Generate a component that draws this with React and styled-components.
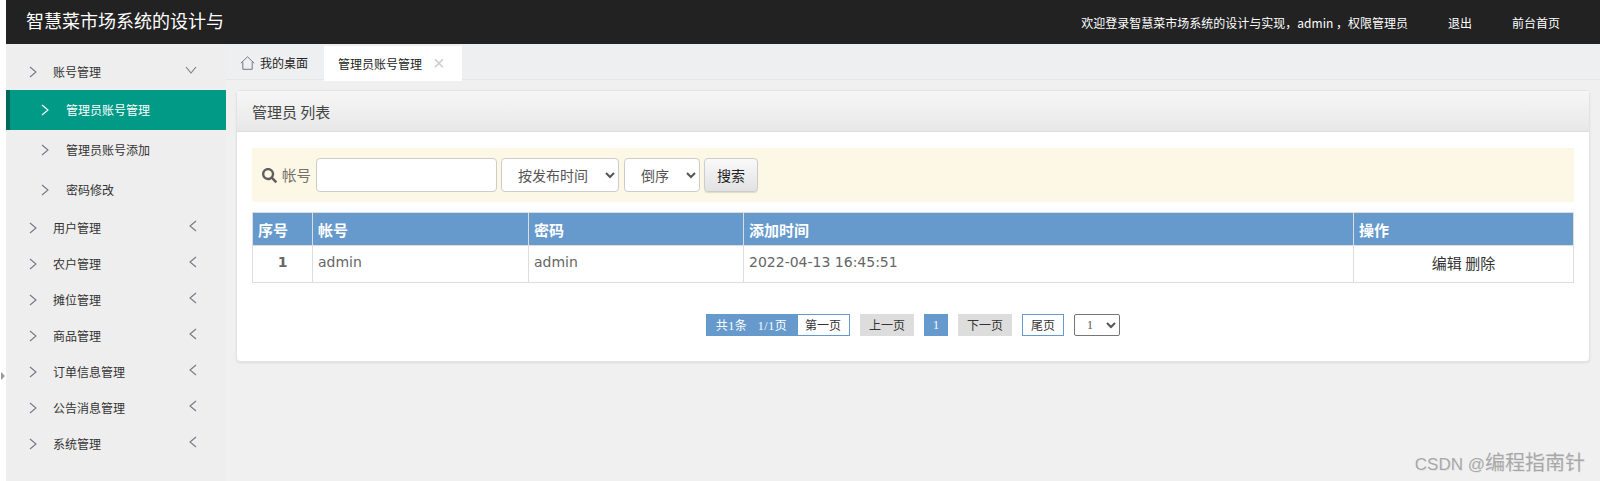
import React from 'react';
import styled, { createGlobalStyle } from 'styled-components';
import { FaSearch } from 'react-icons/fa';

const CJK = '"Noto Sans CJK SC", "Liberation Sans", sans-serif';
const SERIF = '"Liberation Serif", "Noto Sans CJK SC", serif';
const LATIN = '"DejaVu Sans", "Noto Sans CJK SC", sans-serif';

const menus = ['用户管理', '农户管理', '摊位管理', '商品管理', '订单信息管理', '公告消息管理', '系统管理'];
const subMenus = [
    { label: '管理员账号管理', active: true },
    { label: '管理员账号添加' },
    { label: '密码修改' },
];
const columns = ['序号', '帐号', '密码', '添加时间', '操作'];
const colWidths = [60, 216, 215, 610, 220];

const Chevron = ({ dir = 'right', color = '#778', className }) => {
    const size = dir === 'down' ? [12, 8] : [8, 12];
    const points = {
        right: '1,1 7,6 1,11',
        left: '7,1 1,6 7,11',
        down: '1,1 6,7 11,1',
    }[dir];
    return (
        <svg className={className} width={size[0]} height={size[1]} viewBox={`0 0 ${size[0]} ${size[1]}`}>
            <polyline points={points} fill="none" stroke={color} strokeWidth="1.1" />
        </svg>
    );
};

const HomeIcon = () => (
    <svg width="15" height="14" viewBox="0 0 15 14">
        <path d="M0.8 7.2 L7.5 0.8 L14.2 7.2 M2.8 6 V13.3 H12.2 V6" fill="none" stroke="#778" strokeWidth="1" />
    </svg>
);

export default function App() {
    return (
        <Page>
            <GlobalStyle />
            <Gutter>
                <Toggle />
            </Gutter>
            <Main>
                <TopBar>
                    <Title>智慧菜市场系统的设计与</Title>
                    <TopLinks>
                        <Welcome>欢迎登录智慧菜市场系统的设计与实现，admin ，权限管理员</Welcome>
                        <TopLink>退出</TopLink>
                        <TopLink>前台首页</TopLink>
                    </TopLinks>
                </TopBar>
                <Body>
                    <Sidebar>
                        <MenuRow>
                            <MenuLabel>
                                <Chevron />
                                <MenuText>账号管理</MenuText>
                            </MenuLabel>
                            <ToggleChevron dir="down" />
                        </MenuRow>
                        {subMenus.map((item) => (
                            <SubRow key={item.label} $active={item.active}>
                                <Chevron color={item.active ? '#fff' : '#778'} />
                                <MenuText>{item.label}</MenuText>
                            </SubRow>
                        ))}
                        {menus.map((menu) => (
                            <MenuRow key={menu}>
                                <MenuLabel>
                                    <Chevron />
                                    <MenuText>{menu}</MenuText>
                                </MenuLabel>
                                <ToggleChevron dir="left" />
                            </MenuRow>
                        ))}
                    </Sidebar>
                    <Content>
                        <Tabs>
                            <Tab>
                                <HomeIcon />
                                <span>我的桌面</span>
                            </Tab>
                            <ActiveTab>
                                <span>管理员账号管理</span>
                                <Close>×</Close>
                            </ActiveTab>
                        </Tabs>
                        <Panel>
                            <PanelHead>管理员 列表</PanelHead>
                            <PanelBody>
                                <SearchBar>
                                    <SearchIcon />
                                    <SearchLabel>帐号</SearchLabel>
                                    <Input />
                                    <Select $width={118} defaultValue="time">
                                        <option value="time">按发布时间</option>
                                    </Select>
                                    <Select $width={76} defaultValue="desc">
                                        <option value="desc">倒序</option>
                                    </Select>
                                    <SearchButton>搜索</SearchButton>
                                </SearchBar>
                                <Table>
                                    <colgroup>
                                        {colWidths.map((w, i) => (
                                            <col key={i} width={w} />
                                        ))}
                                    </colgroup>
                                    <thead>
                                        <tr>
                                            {columns.map((c) => (
                                                <Th key={c}>{c}</Th>
                                            ))}
                                        </tr>
                                    </thead>
                                    <tbody>
                                        <tr>
                                            <IndexCell>1</IndexCell>
                                            <Td>admin</Td>
                                            <Td>admin</Td>
                                            <Td>2022-04-13 16:45:51</Td>
                                            <ActionCell>编辑 删除</ActionCell>
                                        </tr>
                                    </tbody>
                                </Table>
                                <Pager>
                                    <PagerGroup>
                                        <PagerInfo>共1条&nbsp;&nbsp; 1/1页</PagerInfo>
                                        <PagerOutline>第一页</PagerOutline>
                                    </PagerGroup>
                                    <PagerGrey>上一页</PagerGrey>
                                    <PagerCurrent>1</PagerCurrent>
                                    <PagerGrey>下一页</PagerGrey>
                                    <PagerOutline>尾页</PagerOutline>
                                    <PagerSelect defaultValue="1">
                                        <option value="1">1</option>
                                    </PagerSelect>
                                </Pager>
                            </PanelBody>
                        </Panel>
                    </Content>
                </Body>
            </Main>
            <Watermark>
                <small>CSDN @</small>编程指南针
            </Watermark>
        </Page>
    );
}

const GlobalStyle = createGlobalStyle`
    html, body {
        margin: 0;
        padding: 0;
        background: #fff;
    }
    * {
        box-sizing: border-box;
    }
`;

const Page = styled.div`
    position: relative;
    display: flex;
    width: 1600px;
    height: 481px;
    overflow: hidden;
    font-family: ${CJK};
`;

const Gutter = styled.div`
    width: 6px;
    flex: none;
    padding-top: 372px;
    background: #fff;
`;

const Toggle = styled.div`
    width: 0;
    height: 0;
    margin-left: 1px;
    border-left: 4px solid #999;
    border-top: 4px solid transparent;
    border-bottom: 4px solid transparent;
`;

const Main = styled.div`
    flex: 1;
    display: flex;
    flex-direction: column;
`;

const TopBar = styled.header`
    height: 44px;
    flex: none;
    display: flex;
    align-items: center;
    justify-content: space-between;
    padding: 0 41px 0 20px;
    background: #222;
    color: #fff;
`;

const Title = styled.div`
    font-size: 18px;
    line-height: 40px;
    height: 44px;
`;

const TopLinks = styled.nav`
    display: flex;
    align-items: center;
    gap: 40px;
    font-size: 12px;
`;

const Welcome = styled.span`
    white-space: nowrap;
`;

const TopLink = styled.a`
    color: #fff;
`;

const Body = styled.div`
    flex: 1;
    display: flex;
    min-height: 0;
`;

const Sidebar = styled.aside`
    width: 220px;
    flex: none;
    padding-top: 10px;
    background: #eee;
    color: #333;
    font-size: 12px;
`;

const MenuRow = styled.div`
    height: 36px;
    display: flex;
    align-items: center;
    justify-content: space-between;
    padding: 0 29px 0 23px;
`;

const MenuLabel = styled.div`
    display: flex;
    align-items: center;
    gap: 16px;
`;

const MenuText = styled.span`
    margin-bottom: 2px;
`;

const ToggleChevron = styled(Chevron)`
    margin-bottom: 4px;
`;

const SubRow = styled.div`
    height: 40px;
    display: flex;
    align-items: center;
    gap: 17px;
    padding-left: ${({ $active }) => ($active ? '31px' : '35px')};
    background: ${({ $active }) => ($active ? '#009a87' : 'transparent')};
    border-left: ${({ $active }) => ($active ? '4px solid #00695c' : 'none')};
    color: ${({ $active }) => ($active ? '#fff' : '#333')};
`;

const Content = styled.main`
    flex: 1;
    min-width: 0;
    background: #f0f0f0;
`;

const Tabs = styled.div`
    height: 36px;
    display: flex;
    padding-top: 2px;
    background: #eeeff1;
    border-bottom: 1px solid #e6e6e6;
    font-size: 12px;
    color: #222;
`;

const Tab = styled.div`
    width: 98px;
    display: flex;
    align-items: center;
    gap: 5px;
    padding-left: 14px;
`;

const ActiveTab = styled.div`
    width: 138px;
    height: 35px;
    display: flex;
    align-items: center;
    gap: 11px;
    padding-left: 14px;
    background: #fff;
`;

const Close = styled.span`
    font-family: "Liberation Sans", sans-serif;
    font-size: 20px;
    font-weight: 300;
    color: #ccc;
`;

const Panel = styled.section`
    margin: 10px 11px 0 10px;
    background: #fff;
    border-radius: 4px;
    border: 1px solid #e3e3e3;
    box-shadow: 0 1px 2px rgba(0, 0, 0, 0.08);
`;

const PanelHead = styled.div`
    height: 41px;
    display: flex;
    align-items: center;
    padding-left: 15px;
    background: linear-gradient(#f6f6f6, #e8e8e8);
    border-bottom: 1px solid #ddd;
    font-size: 15px;
    color: #444;
`;

const PanelBody = styled.div`
    padding: 16px 15px 0;
    height: 229px;
`;

const SearchBar = styled.div`
    height: 54px;
    display: flex;
    align-items: center;
    padding: 0 0 0 10px;
    background: #fdf7e5;
    color: #666;
`;

const SearchIcon = styled(FaSearch)`
    width: 15px;
    height: 15px;
    color: #5f5f5f;
`;

const SearchLabel = styled.span`
    margin: 0 5px 0 5px;
    font-size: 14.5px;
    color: #77716a;
    position: relative;
    top: -1px;
`;

const Input = styled.input`
    width: 181px;
    height: 34px;
    padding: 0 8px;
    border: 1px solid #ccc;
    border-radius: 4px;
    background: #fff;
    outline: none;
`;

const Select = styled.select`
    width: ${({ $width }) => $width}px;
    height: 34px;
    margin-left: 4px;
    padding: 0 0 0 12px;
    border: 1px solid #ccc;
    border-radius: 4px;
    background-color: #fff;
    color: #555;
    font-family: ${CJK};
    font-size: 14px;

    & + & {
        margin-left: 5px;
    }
`;

const SearchButton = styled.button`
    width: 54px;
    height: 34px;
    margin-left: 4px;
    padding: 0;
    border: 1px solid #ccc;
    border-radius: 4px;
    background: linear-gradient(#f9f9f9, #e2e2e2);
    box-shadow: 0 1px 1px rgba(0, 0, 0, 0.12);
    color: #222;
    font-family: ${CJK};
    font-size: 14px;
`;

const Table = styled.table`
    width: 1321px;
    margin-top: 10px;
    table-layout: fixed;
    border-collapse: collapse;
    font-family: ${LATIN};
    font-size: 14px;
    color: #666;
`;

const Th = styled.th`
    height: 33px;
    padding: 0 5px;
    border: 1px solid #ddd;
    background: #6699cc;
    color: #fff;
    font-family: ${CJK};
    font-size: 15px;
    font-weight: 700;
    text-align: left;
`;

const Td = styled.td`
    height: 37px;
    padding: 0 5px 4px;
    border: 1px solid #ddd;
`;

const IndexCell = styled(Td)`
    text-align: center;
    font-weight: 700;
`;

const ActionCell = styled(Td)`
    text-align: center;
    font-family: ${CJK};
    font-size: 15px;
    color: #333;
`;

const Pager = styled.div`
    display: flex;
    justify-content: center;
    align-items: center;
    gap: 10px;
    height: 22px;
    margin-top: 31px;
    font-family: ${SERIF};
    font-size: 12px;
    color: #333;
`;

const PagerGroup = styled.div`
    display: flex;
`;

const PagerInfo = styled.span`
    width: 91px;
    height: 22px;
    display: flex;
    align-items: center;
    justify-content: center;
    background: #6699cc;
    color: #fff;
    white-space: pre;
    letter-spacing: 0.5px;
`;

const PagerOutline = styled.span`
    height: 22px;
    display: flex;
    align-items: center;
    padding: 0 8px;
    background: #fff;
    border: 1px solid #6699cc;

    ${PagerInfo} + & {
        width: 53px;
        padding: 0 7px;
    }
`;

const PagerGrey = styled.span`
    width: 54px;
    height: 22px;
    display: flex;
    align-items: center;
    justify-content: center;
    background: #ddd;
`;

const PagerCurrent = styled.span`
    width: 24px;
    height: 22px;
    display: flex;
    align-items: center;
    justify-content: center;
    background: #6699cc;
    color: #fff;
`;

const PagerSelect = styled.select`
    width: 46px;
    height: 22px;
    padding-left: 8px;
    border: 1px solid #767676;
    border-radius: 2px;
    background-color: #fff;
    color: #555;
    font-family: ${SERIF};
    font-size: 12px;
`;

const Watermark = styled.div`
    position: absolute;
    right: 15px;
    bottom: 5px;
    color: #a8a8a8;
    font-family: "Liberation Sans", ${CJK};
    font-size: 20px;
    text-shadow: 1px 1px 0 rgba(0, 0, 0, 0.06);

    small {
        font-size: 17px;
    }
`;
